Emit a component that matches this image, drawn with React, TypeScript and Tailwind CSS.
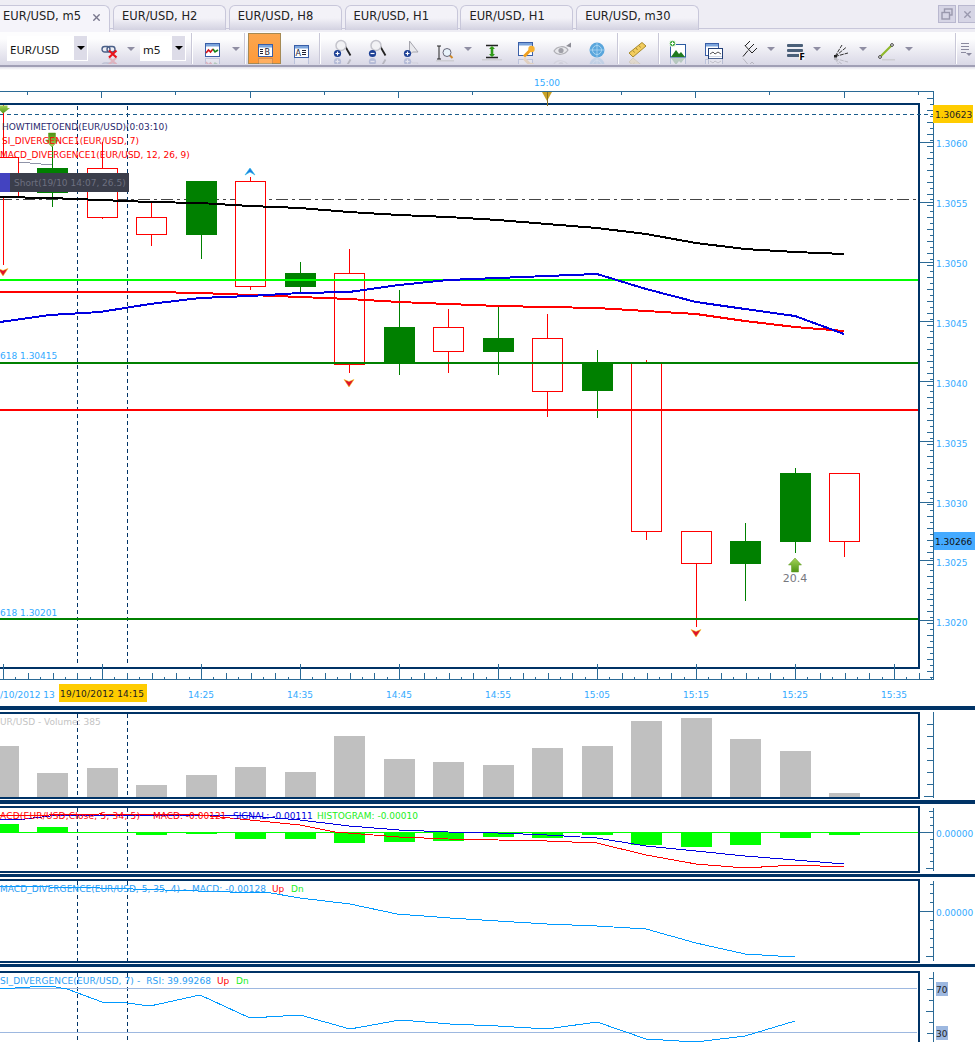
import type { ReactNode } from "react";
import { X } from "lucide-react";

const NAVY = "#003366";
const AXIS = "#2b6a96";
const LABEL = "#33aaff";
const FONT = "'DejaVu Sans', sans-serif";

const tabs = ["EUR/USD, H2", "EUR/USD, H8", "EUR/USD, H1", "EUR/USD, H1", "EUR/USD, m30"];

// x, body top, body bottom, wick top, wick bottom, bullish
const candles: [number, number, number, number, number, boolean][] = [
  [3, 157, 197, 105, 265, false],
  [52, 168, 193, 140, 207, true],
  [102, 168, 217, 142, 219, false],
  [151, 217, 234, 202, 246, false],
  [201, 181, 235, 181, 259, true],
  [250, 181, 286, 177, 290, false],
  [300, 273, 287, 262, 292, true],
  [349, 273, 364, 249, 373, false],
  [399, 327, 364, 290, 375, true],
  [448, 327, 351, 309, 373, false],
  [498, 338, 352, 306, 375, true],
  [547, 338, 391, 314, 417, false],
  [597, 363, 391, 350, 418, true],
  [646, 362, 531, 360, 540, false],
  [696, 531, 563, 531, 627, false],
  [745, 541, 564, 523, 601, true],
  [795, 473, 542, 468, 553, true],
  [844, 473, 541, 473, 557, false],
];

const blackMa = "0,197 50,198 100,200 150,202 200,203 250,206 300,208 349,212 399,215 448,217 498,220 547,224 597,228 646,234 696,243 745,249 795,252 844,254";
const blueMa = "0,322 50,315 100,312 150,304 200,298 250,296 300,293 349,292 399,285 448,280 498,278 547,276 597,274 646,289 696,302 745,309 795,316 844,334";
const redMa = "0,292 100,292 151,292 200,293 250,295 300,297 349,299 399,302 448,304 498,306 547,307 597,308 646,311 696,314 745,321 795,327 844,331";

const volumes: [number, number][] = [
  [3, 746], [52, 773], [102, 768], [151, 785], [201, 775], [250, 767], [300, 772], [349, 736], [399, 759],
  [448, 762], [498, 765], [547, 748], [597, 746], [646, 721], [696, 718], [745, 739], [795, 751], [844, 793],
];

const histogram: [number, number, number][] = [
  [3, 824, 832], [52, 827, 832], [151, 832, 835], [201, 832, 834], [250, 832, 839], [300, 832, 839],
  [349, 832, 843], [399, 832, 842], [448, 832, 841], [498, 832, 837], [547, 832, 838], [597, 832, 835],
  [646, 832, 845], [696, 832, 847], [745, 832, 845], [795, 832, 838], [844, 832, 835],
];

const timeLabels: [number, string][] = [
  [201, "14:25"], [300, "14:35"], [399, "14:45"], [498, "14:55"], [597, "15:05"], [696, "15:15"], [795, "15:25"], [894, "15:35"],
];

const priceLabels: [number, string][] = [
  [143, "1.3060"], [203, "1.3055"], [263, "1.3050"], [323, "1.3045"], [383, "1.3040"],
  [443, "1.3035"], [503, "1.3030"], [562, "1.3025"], [622, "1.3020"],
];

function Txt({ x, y, fill = LABEL, size = 9, anchor, fit, children }: { x: number; y: number; fill?: string; size?: number; anchor?: "middle" | "end"; fit?: number; children: ReactNode }) {
  return (
    <text x={x} y={y} fill={fill} fontSize={size} fontFamily={FONT} textAnchor={anchor} textLength={fit} xmlSpace="preserve">
      {children}
    </text>
  );
}

// reflect: what is mirrored under the icon; defaults to the icon, null for none
function Ico({ children, reflect }: { children: ReactNode; reflect?: ReactNode }) {
  const mirrored = reflect === undefined ? children : reflect;
  return (
    <svg width="22" height="30" viewBox="0 0 22 30">
      {children}
      {mirrored && (
        <g transform="translate(0,47) scale(1,-1)" opacity="0.2">
          {mirrored}
        </g>
      )}
    </svg>
  );
}

function Win({ x = 3, y = 9, w = 15, h = 14 }: { x?: number; y?: number; w?: number; h?: number }) {
  return (
    <g>
      <rect x={x + 0.5} y={y + 0.5} width={w - 1} height={h - 1} fill="#fff" stroke="#3a5fa8" />
      <rect x={x + 1} y={y + 1} width={w - 2} height="2.5" fill="#7ba4dc" />
    </g>
  );
}

function Glass() {
  return (
    <g>
      <path d="M14 12L19.5 21.5" stroke="#222" strokeWidth="1.8" />
      <circle cx="10" cy="11.5" r="5" fill="#f2f2f5" stroke="#c4c4cc" strokeWidth="1.5" />
    </g>
  );
}

function Badge({ minus }: { minus?: boolean }) {
  return (
    <g>
      <circle cx="6.5" cy="19.5" r="3.6" fill="#1c3f94" />
      <path d={minus ? "M4.5 19.5h4" : "M4.5 19.5h4M6.5 17.5v4"} stroke="#fff" strokeWidth="1.2" />
    </g>
  );
}

function Caret({ className }: { className: string }) {
  return (
    <div className={`flex shrink-0 items-center justify-center ${className}`}>
      <div className="h-0 w-0 border-x-[4px] border-t-[4px] border-x-transparent border-t-[#8f8ea3]" />
    </div>
  );
}

function Slot({ className, children }: { className: string; children: ReactNode }) {
  return <div className={`flex shrink-0 items-center justify-center ${className}`}>{children}</div>;
}

function Sep({ className = "" }: { className?: string }) {
  return <div className={`h-[31px] w-[2px] shrink-0 border-r border-r-white bg-[#c9c8d8] ${className}`} />;
}

function Combo({ label, className }: { label: string; className: string }) {
  return (
    <div className={`flex h-[25px] shrink-0 items-stretch bg-white pl-[3px] ${className}`}>
      <span className="flex-1 font-['Noto_Sans',sans-serif] text-[11.5px] leading-[27px] text-[#111]">{label}</span>
      <span className="mb-[1px] mr-[1px] flex w-[13px] items-center justify-center bg-[#dddce8]">
        <span className="h-0 w-0 border-x-[4px] border-t-[4px] border-x-transparent border-t-black" />
      </span>
    </div>
  );
}

function TabBar() {
  return (
    <div className="relative flex h-[32px] shrink-0 items-end bg-[#eeedf4] pl-[113px]">
      <div className="absolute bottom-[3px] left-0 right-0 h-px bg-[#c8c7da]" />
      <div className="absolute bottom-0 left-0 top-[5px] z-10 flex w-[110px] items-center justify-between rounded-tr-[6px] border-r border-t border-[#c8c7da] bg-[#f5f4fa] pl-[3px] pr-[7px]">
        <span className="pb-[4px] text-[11.5px] text-[#222]">EUR/USD, m5</span>
        <X size={11} strokeWidth={3} className="mb-[4px] text-[#77768c]" />
      </div>
      <div className="z-0 mb-[2px] flex h-[25px] gap-[2.8px]">
        {tabs.map((t, i) => (
          <div
            key={i}
            className={`flex items-center rounded-t-[6px] border border-b-0 border-[#c8c7da] bg-gradient-to-b from-[#f3f2f8] from-50% to-[#d3d2e1] pb-[3px] pl-[8px] text-[11.5px] text-[#222] ${i === 4 ? "w-[123px]" : "w-[113px]"}`}
          >
            {t}
          </div>
        ))}
      </div>
      <div className="absolute right-0 top-[5px] flex gap-[2px]">
        <div className="flex h-[18px] w-[18px] items-center justify-center border border-[#b9b8cf] bg-[#d6d5e5]">
          <svg width="12" height="12" viewBox="0 0 12 12" fill="none" stroke="#9998ad" strokeWidth="1.4">
            <rect x="3.5" y="1" width="7.5" height="6" />
            <rect x="1" y="4.5" width="7.5" height="6.5" fill="#d6d5e5" />
          </svg>
        </div>
        <div className="flex h-[18px] w-[17px] items-center justify-center border border-r-0 border-[#b9b8cf] bg-[#d6d5e5]">
          <X size={11} strokeWidth={3} className="text-[#9998ad]" />
        </div>
      </div>
    </div>
  );
}

function Toolbar() {
  return (
    <div className="h-[38px] shrink-0 bg-gradient-to-b from-[#d8d7e3] from-90% to-white">
      <div className="flex h-[35px] items-center border-b-2 border-[#a09fb5] bg-gradient-to-b from-[#fdfdfe] from-20% to-[#d9d8e6] pl-[7px]">
        <Combo label="EUR/USD" className="mr-[4px] w-[81px]" />
        <Slot className="w-[36px]">
          <Ico>
            <g fill="none" stroke="#4a5f88" strokeWidth="1.4">
              <rect x="3" y="12.5" width="8" height="5.5" rx="2.7" />
              <rect x="8" y="12.5" width="8" height="5.5" rx="2.7" />
            </g>
            <path d="M10 16.5l7.5 7M17.5 16.5l-7.5 7" stroke="#e8141c" strokeWidth="2.2" />
          </Ico>
        </Slot>
        <Caret className="w-[6px]" />
        <Combo label="m5" className="ml-[6px] w-[46px]" />
        <Sep className="ml-[5px]" />
        <Slot className="ml-[4px] w-[30px]">
          <Ico>
            <Win x={4} />
            <path d="M5 19l2.5-3 2 2 2.5-3" fill="none" stroke="#d3131b" strokeWidth="1.6" />
            <path d="M12 15l2 3 3-2" fill="none" stroke="#178217" strokeWidth="1.6" />
          </Ico>
        </Slot>
        <Caret className="w-[17px]" />
        <Sep />
        <Slot className="ml-[2px] h-[31px] w-[33px] border border-[#a58a55] bg-gradient-to-b from-[#fba64f] to-[#ff9a38]">
          <Ico reflect={<Win x={4} y={10} h={13} />}>
            <Win x={4} y={10} h={13} />
            <path d="M6 15.5h3M6 17.5h3M6 19.5h3" stroke="#223" />
            <text x="10.5" y="21" fontSize="8" fontFamily={FONT} fill="#223">B</text>
          </Ico>
        </Slot>
        <Slot className="ml-[2px] w-[36px]">
          <Ico reflect={<Win x={4} y={11} h={13} />}>
            <Win x={4} y={11} h={13} />
            <text x="5.5" y="22" fontSize="8" fontFamily={FONT} fill="#223">A</text>
            <path d="M12 16.5h4M12 18.5h4M12 20.5h4" stroke="#223" />
          </Ico>
        </Slot>
        <Sep />
        <Slot className="ml-[3px] w-[35px]">
          <Ico>
            <Glass />
            <Badge />
          </Ico>
        </Slot>
        <Slot className="w-[35px]">
          <Ico>
            <Glass />
            <Badge minus />
          </Ico>
        </Slot>
        <Slot className="w-[35px]">
          <Ico>
            <path d="M8.5 7v14l3-3h5.5z" fill="#e9e9ed" stroke="#a5a5ad" />
            <Badge />
          </Ico>
        </Slot>
        <Slot className="w-[32px]">
          <Ico reflect={null}>
            <path d="M5 12v13M3 12h4M3 25h4" stroke="#222" />
            <path d="M15.5 21l3 3" stroke="#d08a2a" strokeWidth="2" />
            <circle cx="13" cy="18.5" r="4" fill="#e8f3fb" stroke="#667" />
            <rect x="2" y="26" width="18" height="1.5" fill="#bbb" opacity="0.5" />
          </Ico>
        </Slot>
        <Caret className="w-[14px]" />
        <Slot className="w-[34px]">
          <Ico reflect={null}>
            <path d="M5 11.5h12M5 23.5h12" stroke="#222" strokeWidth="1.3" />
            <path d="M11 13v9" stroke="#2f9a18" strokeWidth="2.6" />
            <path d="M8 15l3-3 3 3zM8 20l3 3 3-3z" fill="#2f9a18" />
            <rect x="1" y="25" width="20" height="1.5" fill="#bbb" opacity="0.5" />
          </Ico>
        </Slot>
        <Slot className="w-[36px]">
          <Ico>
            <Win x={2} y={8} />
            <path d="M8 22.5l6-6" stroke="#f0a020" strokeWidth="3" />
            <circle cx="15.5" cy="15" r="3.2" fill="#f5b030" />
          </Ico>
        </Slot>
        <Slot className="w-[36px]">
          <Ico>
            <path d="M2 17c3-5 11-6 14-1-3 5-11 6-14 1z" fill="#e8e8ec" stroke="#aeaeb4" strokeWidth="1.2" />
            <circle cx="9" cy="16.5" r="2.6" fill="#a0a0a8" />
            <path d="M14 12l5-3.5v5z" fill="#8d8d96" />
          </Ico>
        </Slot>
        <Slot className="w-[32px]">
          <Ico>
            <circle cx="11" cy="16" r="7.5" fill="#5aa6dc" />
            <circle cx="11" cy="16" r="4.5" fill="none" stroke="#a9d6f2" />
            <path d="M11 8.5v15M3.5 16h15" stroke="#a9d6f2" strokeWidth="0.8" />
          </Ico>
        </Slot>
        <Sep className="ml-[4px]" />
        <Slot className="w-[36px]">
          <Ico>
            <path d="M3 19L16 8.5l4 3.5L7 23z" fill="#f2cc5e" stroke="#a88a2c" />
            <path d="M7 16.5l1.5 2M10 14l1.5 2M13 11.5l1.5 2" stroke="#a88a2c" />
          </Ico>
        </Slot>
        <Sep className="ml-[3px]" />
        <Slot className="w-[36px]">
          <Ico>
            <rect x="3.5" y="10.5" width="15" height="12.5" fill="#fff" stroke="#2a5aa0" />
            <path d="M4 23l5-7 3 4 2-2 4 5z" fill="#1f7a1f" />
            <circle cx="5.5" cy="9.5" r="3.2" fill="#39a339" stroke="#fff" />
            <path d="M3.7 9.5h3.6M5.5 7.7v3.6" stroke="#fff" />
          </Ico>
        </Slot>
        <Slot className="w-[35px]">
          <Ico>
            <Win x={2} y={9} w={14} h={13} />
            <rect x="5.5" y="14.5" width="14" height="10" fill="#fff" stroke="#223f78" />
            <path d="M7 20l3-2 2 2 3-2 3 2" fill="none" stroke="#555" />
          </Ico>
        </Slot>
        <Slot className="w-[34px]">
          <Ico>
            <path d="M6 22.5l5-6M8 11.5l7 7.5M8 12l5-5M11.5 15.5l5.5-5.5M15 19l5-5" fill="none" stroke="#222" strokeWidth="1" />
          </Ico>
        </Slot>
        <Caret className="w-[12px]" />
        <Slot className="w-[36px]">
          <Ico reflect={null}>
            <rect x="3" y="10" width="16" height="3" rx="1" fill="#4a5f78" />
            <rect x="3" y="15" width="16" height="3" rx="1" fill="#4a5f78" />
            <rect x="3" y="20" width="13" height="3" rx="1" fill="#4a5f78" />
            <rect x="15" y="19" width="5.5" height="6.5" fill="#fff" />
            <text x="15.5" y="25.5" fontSize="8" fontWeight="bold" fontFamily={FONT} fill="#000">F</text>
          </Ico>
        </Slot>
        <Caret className="w-[8px]" />
        <Slot className="w-[38px]">
          <Ico>
            <path d="M6 22.5L13 11M6 22.5l11-9M6 22.5l13-3.5" stroke="#333" strokeWidth="1" strokeDasharray="4 1" />
            <rect x="5" y="21" width="3" height="2.5" fill="#222" />
          </Ico>
        </Slot>
        <Caret className="w-[8px]" />
        <Slot className="w-[36px]">
          <Ico reflect={null}>
            <path d="M6 23L18 11" stroke="#8fb82a" strokeWidth="2.2" />
            <circle cx="6" cy="23" r="1.4" fill="#fff" stroke="#444" />
            <circle cx="18" cy="11" r="1.4" fill="#fff" stroke="#444" />
            <rect x="8" y="25" width="13" height="1.5" fill="#bbb" opacity="0.5" />
          </Ico>
        </Slot>
        <Caret className="w-[12px]" />
        <div className="flex-1" />
        <Sep />
        <Slot className="w-[18px]">
          <svg width="12" height="14" viewBox="0 0 12 14" stroke="#8a899e">
            <path d="M1 1.5h8M1 4.5h8M1 7.5h8M1 10.5h5" />
            <path d="M6 11h6l-3 3z" fill="#8a899e" stroke="none" />
          </svg>
        </Slot>
      </div>
    </div>
  );
}

function DashedGuides({ top, bottom }: { top: number; bottom: number }) {
  return (
    <g stroke={NAVY} strokeDasharray="4 3" shapeRendering="crispEdges">
      <line x1="77.5" x2="77.5" y1={top} y2={bottom} />
      <line x1="127.5" x2="127.5" y1={top} y2={bottom} />
    </g>
  );
}

function SideAxis({ top, bottom, major, ticks }: { top: number; bottom: number; major: number[]; ticks: [number, number][] }) {
  return (
    <g stroke={AXIS} shapeRendering="crispEdges">
      <line x1="933.5" x2="933.5" y1={top} y2={bottom} />
      {major.map((y) => (
        <line key={y} x1="920" x2="933" y1={y + 0.5} y2={y + 0.5} />
      ))}
      {ticks.map(([y, x]) => (
        <line key={y} x1={x} x2="933" y1={y + 0.5} y2={y + 0.5} />
      ))}
    </g>
  );
}

function DownArrow({ x, y }: { x: number; y: number }) {
  return <path transform={`translate(${x} ${y})`} d="M-5-3.5L0-1.5 5-3.5 0 4z" fill="#e0102e" stroke="#f5d000" strokeWidth="0.5" />;
}

function GreenArrow({ x, y, up }: { x: number; y: number; up?: boolean }) {
  return (
    <path
      transform={`translate(${x} ${y}) scale(1 ${up ? 1 : -1})`}
      d="M0-7L6.5 0H3.5V7H-3.5V0H-6.5z"
      fill="url(#arrowGreen)"
      stroke="#5c9a1c"
      strokeWidth="0.5"
    />
  );
}

function Line({ points, stroke, width = 1 }: { points: string; stroke: string; width?: number }) {
  return <polyline points={points} fill="none" stroke={stroke} strokeWidth={width} shapeRendering="crispEdges" />;
}

function MainPane() {
  const topTicks = [27, 101, 175, 250, 324, 398, 472, 547, 621, 695, 769, 844, 918];
  const priceTicks: [number, number][] = [];
  for (let i = 0; i < 98; i++) {
    priceTicks.push([Math.round(98 + i * 5.97), i % 2 ? 930 : 927]);
  }
  const timeTicks: [number, number][] = [];
  for (let i = -8; i < 76; i++) {
    timeTicks.push([3 + i * 12.375, i % 8 === 0 ? 664 : i % 2 === 0 ? 673 : 677]);
  }
  return (
    <div className="relative h-[636px] shrink-0 pb-[37px] pt-[33px]">
      <div className="h-full w-[920px] border-y-[2.5px] border-r-[2px] border-[#003366]" />
      <svg className="absolute inset-0" width="975" height="636" viewBox="0 70 975 636">
        <defs>
          <linearGradient id="arrowGreen" x1="0" x2="0" y1="0" y2="1">
            <stop offset="0" stopColor="#a6d45a" />
            <stop offset="1" stopColor="#4e9414" />
          </linearGradient>
        </defs>
        <DashedGuides top={106} bottom={665} />
        <line x1="0" x2="933" y1="114.5" y2="114.5" stroke="#1a5c8c" strokeDasharray="4 3" shapeRendering="crispEdges" />
        <line x1="0" x2="918" y1="199.5" y2="199.5" stroke="#444" strokeDasharray="12 4 3 4" shapeRendering="crispEdges" />

        <Line points="10,162 30,163 52,165" stroke="#8f94a8" />

        {candles.map(([x, top, bottom, wt, wb, up]) => (
          <g key={x} shapeRendering="crispEdges">
            <line x1={x + 0.5} x2={x + 0.5} y1={wt} y2={wb} stroke={up ? "#008000" : "#ff0000"} />
            {up ? (
              <rect x={x - 15} y={top} width="31" height={bottom - top} fill="#008000" />
            ) : (
              <rect x={x - 14.5} y={top + 0.5} width="30" height={bottom - top} fill="#fff" stroke="#ff0000" />
            )}
          </g>
        ))}

        <g shapeRendering="crispEdges">
          <rect x="0" y="279" width="918" height="2" fill="#00ff00" />
          <rect x="0" y="362" width="918" height="2" fill="#008000" />
          <rect x="0" y="409" width="918" height="2" fill="#ff0000" />
          <rect x="0" y="618" width="918" height="2" fill="#008000" />
        </g>
        <Line points={redMa} stroke="#ff0000" width={2} />
        <Line points={blueMa} stroke="#0000e0" width={2} />
        <Line points={blackMa} stroke="#000" width={2} />

        <Txt x={0} y={359}>618 1.30415</Txt>
        <Txt x={0} y={616}>618 1.30201</Txt>

        <path d="M0 105.5h7.5v2.5h2.5L3 113.5 0 110.5z" fill="url(#arrowGreen)" />
        <GreenArrow x={52} y={140} />
        <path d="M245 175L250 168 255 175 250 172z" fill="#1a7ce0" stroke="#27b8e8" strokeWidth="0.6" />
        <DownArrow x={3} y={272} />
        <DownArrow x={349} y={383} />
        <DownArrow x={696} y={633} />
        <GreenArrow x={795} y={565} up />
        <Txt x={795} y={582} size={11} fill="#77787e" anchor="middle">20.4</Txt>

        <Txt x={2} y={130} fill="#2b2a6e">HOWTIMETOEND(EUR/USD)(0:03:10)</Txt>
        <Txt x={2} y={144} fill="#ff0000">SI_DIVERGENCE1(EUR/USD, 7)</Txt>
        <Txt x={0} y={158} fill="#ff0000">MACD_DIVERGENCE1(EUR/USD, 12, 26, 9)</Txt>

        <rect x="0" y="173" width="129" height="19" fill="#3b3e4b" />
        <rect x="0" y="173" width="10" height="19" fill="#4343c0" />
        <Txt x={14} y={186} fill="#6d7080">Short(19/10 14:07, 26.5)</Txt>

        {/* top ruler */}
        <g stroke={AXIS} shapeRendering="crispEdges">
          <line x1="0" x2="933" y1="91.5" y2="91.5" />
          {topTicks.map((x, i) => (
            <line key={x} x1={x + 0.5} x2={x + 0.5} y1="91" y2={i % 2 ? 98 : 95} />
          ))}
        </g>
        <Txt x={547} y={86} anchor="middle">15:00</Txt>
        <path d="M542 92h10l-5 9z" fill="#c9a227" />
        <line x1="547.5" x2="547.5" y1="92" y2="106" stroke="#8a7020" />

        {/* price axis */}
        <SideAxis
          top={91}
          bottom={680}
          major={[142, 202, 262, 321, 381, 441, 502, 560, 620]}
          ticks={priceTicks.filter(([y]) => y < 680)}
        />
        {priceLabels.map(([y, t]) => (
          <Txt key={t} x={936} y={y + 4}>{t}</Txt>
        ))}
        <rect x="933" y="105" width="40" height="18" fill="#ffcc00" />
        <Txt x={935} y={118} fill="#222">1.30623</Txt>
        <rect x="934" y="532" width="41" height="18" fill="#44aaff" />
        <Txt x={935} y={545} fill="#111">1.30266</Txt>

        {/* time axis */}
        <g stroke={AXIS} shapeRendering="crispEdges">
          <line x1="0" x2="933" y1="679.5" y2="679.5" />
          {timeTicks.map(([x, y]) => (
            <line key={x} x1={Math.round(x) + 0.5} x2={Math.round(x) + 0.5} y1={y} y2="680" />
          ))}
        </g>
        <Txt x={0} y={698}>/10/2012 13</Txt>
        <rect x="59" y="684" width="88" height="18" fill="#ffcc00" />
        <Txt x={60} y={697} fill="#222" fit={84}>19/10/2012 14:15</Txt>
        {timeLabels.map(([x, t]) => (
          <Txt key={t} x={x} y={698} anchor="middle">{t}</Txt>
        ))}
      </svg>
    </div>
  );
}

function Bar({ className }: { className: string }) {
  return <div className={`shrink-0 bg-[#003366] ${className}`} />;
}

function VolumePane() {
  const ticks: [number, number][] = [724, 736, 748, 760, 772, 784, 796].map((y, i) => [y, i === 6 ? 924 : 927]);
  return (
    <div className="relative h-[90px] shrink-0 pb-[1px] pt-[2px]">
      <div className="h-full w-[920px] border-y-2 border-r-2 border-[#003366]" />
      <svg className="absolute inset-0" width="975" height="90" viewBox="0 710 975 90">
        <DashedGuides top={714} bottom={797} />
        {volumes.map(([x, top]) => (
          <rect key={x} x={x - 15} y={top} width="31" height={797 - top} fill="#c0c0c0" shapeRendering="crispEdges" />
        ))}
        <Txt x={0} y={725} fill="#c4c4c4">UR/USD - Volume: 385</Txt>
        <SideAxis top={712} bottom={798} major={[]} ticks={ticks} />
      </svg>
    </div>
  );
}

function MacdPane() {
  return (
    <div className="relative h-[70px] shrink-0 pb-[1px] pt-[2px]">
      <div className="h-full w-[920px] border-y-2 border-r-2 border-[#003366]" />
      <svg className="absolute inset-0" width="975" height="70" viewBox="0 804 975 70">
        <DashedGuides top={808} bottom={871} />
        {histogram.map(([x, top, bottom]) => (
          <rect key={x} x={x - 15} y={top} width="31" height={bottom - top} fill="#00ff00" shapeRendering="crispEdges" />
        ))}
        <rect x="0" y="832" width="918" height="1" fill="#00ff00" shapeRendering="crispEdges" />
        <Line points="0,820 25,819 50,816 150,815 250,816 300,820 349,826 399,830 448,832 498,833 547,835 597,838 646,846 696,851 745,856 795,860 844,864" stroke="#0000e0" />
        <Line points="0,816 100,814 200,815 250,820 300,825 335,832 399,837 448,839 498,840 547,841 597,843 646,855 696,864 745,868 795,865 844,867" stroke="#ff0000" />
        <Txt x={0} y={819} fill="#ff0000" fit={140}>ACD(EUR/USD,Close, 5, 34, 5)</Txt>
        <Txt x={153} y={819} fill="#ff0000">MACD: -0.00121</Txt>
        <Txt x={233} y={819} fill="#0000e0">SIGNAL: -0.00111</Txt>
        <Txt x={317} y={819} fill="#22ee22">HISTOGRAM: -0.00010</Txt>
        <SideAxis
          top={808}
          bottom={871}
          major={[832]}
          ticks={[[811, 929], [817, 930], [825, 930], [839, 930], [847, 930], [853, 930], [861, 930], [868, 926]]}
        />
        <Txt x={936} y={837}>0.00000</Txt>
      </svg>
    </div>
  );
}

function MacdDivergencePane() {
  return (
    <div className="relative h-[87px] shrink-0 pb-[1px] pt-[2px]">
      <div className="h-full w-[920px] border-y-2 border-r-2 border-[#003366]" />
      <svg className="absolute inset-0" width="975" height="87" viewBox="0 877 975 87">
        <DashedGuides top={881} bottom={961} />
        <Line points="0,886 100,888 230,892 265,892 300,898 350,904 397,914 450,918 498,921 547,924 597,926 646,929 696,943 745,954 795,957" stroke="#0099ff" />
        <Txt x={0} y={892} fill="#2a9df4" fit={266}>MACD_DIVERGENCE(EUR/USD, 5, 35, 4) -  MACD: -0.00128</Txt>
        <Txt x={272} y={892} fill="#ff0000">Up</Txt>
        <Txt x={291} y={892} fill="#22ee22">Dn</Txt>
        <SideAxis
          top={881}
          bottom={961}
          major={[911]}
          ticks={[[884, 930], [893, 930], [902, 930], [920, 930], [929, 930], [938, 930], [947, 930], [956, 926]]}
        />
        <Txt x={936} y={916}>0.00000</Txt>
      </svg>
    </div>
  );
}

function RsiPane() {
  return (
    <div className="relative min-h-0 flex-1 overflow-hidden pt-[4px]">
      <div className="h-[90px] w-[920px] border-y-2 border-r-2 border-[#003366]" />
      <svg className="absolute inset-0" width="975" height="75" viewBox="0 967 975 75">
        <DashedGuides top={973} bottom={1042} />
        <g fill="#9db8e0" shapeRendering="crispEdges">
          <rect x="0" y="988" width="917" height="1" />
          <rect x="0" y="1032" width="917" height="1" />
        </g>
        <Line points="0,989 30,987 50,986 67,989 102,1002 127,1003 150,1006 200,995 250,1018 300,1015 350,1029 400,1020 450,1024 498,1026 547,1029 597,1022 646,1039 696,1042 745,1036 795,1021" stroke="#0099ff" />
        <Txt x={0} y={984} fill="#2a9df4" fit={211}>SI_DIVERGENCE(EUR/USD, 7) -  RSI: 39.99268</Txt>
        <Txt x={217} y={984} fill="#ff0000">Up</Txt>
        <Txt x={236} y={984} fill="#22ee22">Dn</Txt>
        <SideAxis top={972} bottom={1042} major={[]} ticks={[[978, 929], [989, 927], [1000, 929], [1011, 926], [1022, 929], [1033, 927]]} />
        <rect x="936" y="982" width="12" height="14" fill="#9db8e0" />
        <Txt x={936} y={993} fill="#222">70</Txt>
        <rect x="936" y="1026" width="12" height="14" fill="#9db8e0" />
        <Txt x={936} y={1037} fill="#222">30</Txt>
      </svg>
    </div>
  );
}

export default function App() {
  return (
    <div className="flex h-[1042px] w-[975px] flex-col overflow-hidden bg-white font-['DejaVu_Sans',sans-serif]">
      <TabBar />
      <Toolbar />
      <MainPane />
      <Bar className="h-[4px]" />
      <VolumePane />
      <Bar className="h-[4px]" />
      <MacdPane />
      <Bar className="h-[3px]" />
      <MacdDivergencePane />
      <Bar className="h-[3px]" />
      <RsiPane />
    </div>
  );
}
